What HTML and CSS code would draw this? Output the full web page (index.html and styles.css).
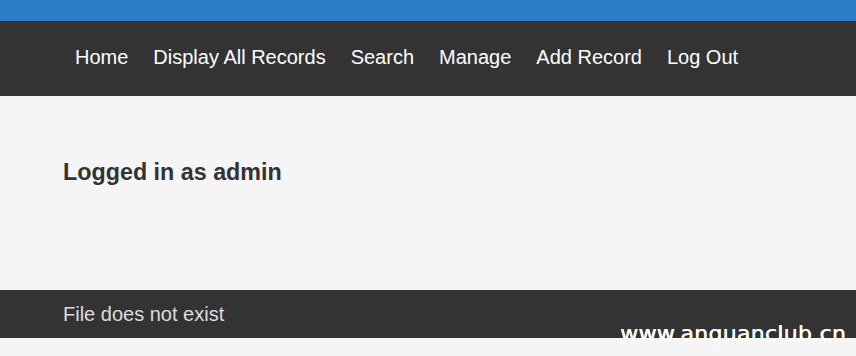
FILE: index.html
```html
<!DOCTYPE html>
<html lang="en">
<head>
    <meta charset="UTF-8">
    <title>Records</title>
    <link rel="stylesheet" href="styles.css">
</head>
<body>
<div class="top-bar"></div>
<nav class="menu">
    <ul>
        <li><a href="#">Home</a></li>
        <li><a href="#">Display All Records</a></li>
        <li><a href="#">Search</a></li>
        <li><a href="#">Manage</a></li>
        <li><a href="#">Add Record</a></li>
        <li><a href="#">Log Out</a></li>
    </ul>
</nav>
<div class="content">
    <h2>Logged in as admin</h2>
</div>
<div class="footer">
    File does not exist
</div>
<span class="watermark">www.anquanclub.cn</span>
</body>
</html>
```

FILE: styles.css
```css
* {
    font-family: "Liberation Sans", Arial, sans-serif;
}
html, body {
    margin: 0;
    padding: 0;
}
body {
    background-color: #f5f5f5;
    position: relative;
    height: 356px;
    overflow: hidden;
}
.top-bar {
    height: 21px;
    background-color: #2b7ec6;
}
.menu {
    background-color: #333333;
    height: 75px;
    box-sizing: border-box;
    padding-top: 24px;
    padding-left: 75px;
}
.menu ul {
    list-style: none;
    margin: 0;
    padding: 0;
    display: flex;
    gap: 25px;
}
.menu a {
    color: #ffffff;
    text-decoration: none;
    font-size: 20px;
    line-height: 24px;
}
.content {
    height: 194px;
    box-sizing: border-box;
    padding: 62px 63px 0;
}
.content h2 {
    margin: 0;
    font-size: 23.3px;
    line-height: 28px;
    font-weight: bold;
    color: #333333;
}
.footer {
    background-color: #333333;
    color: #dddddd;
    height: 48px;
    box-sizing: border-box;
    padding: 12px 63px;
    font-size: 20px;
    line-height: 24px;
}
.watermark {
    position: absolute;
    left: 620px;
    top: 321px;
    font-family: "DejaVu Sans", sans-serif;
    font-size: 22px;
    line-height: 26px;
    letter-spacing: 0.3px;
    color: #ffffff;
    text-shadow: 0.6px 0 0 #ffffff;
}
```
